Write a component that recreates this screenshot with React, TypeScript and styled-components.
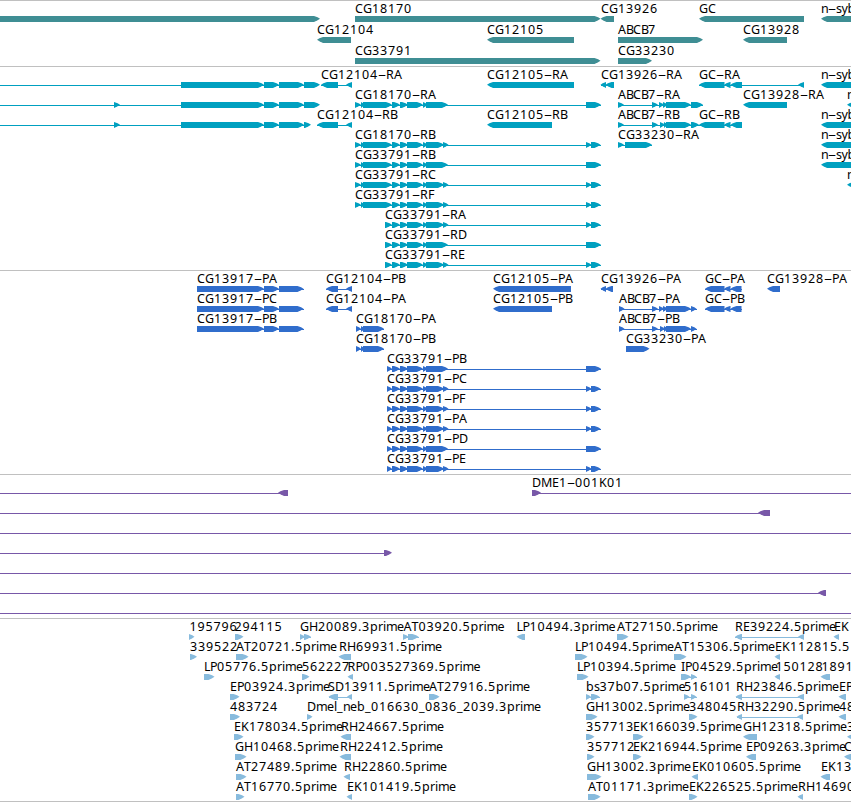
import React from "react";
import styled, { createGlobalStyle } from "styled-components";

const GlobalStyle = createGlobalStyle`
  html, body {
    margin: 0;
    padding: 0;
    background: #ffffff;
    overflow: hidden;
  }
`;

const Browser = styled.main`
  width: 851px;
  height: 802px;
  overflow: hidden;
  display: flex;
  flex-direction: column;
  background: #ffffff;
`;

const TrackPanel = styled.section<{ $color: string; $height: number }>`
  box-sizing: border-box;
  flex: none;
  height: ${(p) => p.$height}px;
  border-top: 1px solid #c0c0c0;
  display: flex;
  flex-direction: column;
  color: ${(p) => p.$color};

  &:last-child {
    border-bottom: 1px solid #c0c0c0;
  }
`;

const Lane = styled.svg<{ $pitch: number }>`
  display: block;
  flex: none;
  width: 851px;
  height: ${(p) => p.$pitch}px;
  overflow: visible;
`;

const Label = styled.text`
  font-family: "Noto Sans", sans-serif;
  font-size: 12.5px;
  fill: #000000;
  white-space: pre;
`;

const Intron = styled.rect`
  fill: currentColor;
  shape-rendering: crispEdges;
`;

const Exon = styled.polygon`
  fill: currentColor;
`;

type Dir = "r" | "l";
type Feature = {
  name: string;
  at: number;
  dir: Dir;
  exons: string;
  line?: [number, number];
};
type TrackData = { color: string; height: number; pitch: number; lanes: Feature[][] };

const ADVANCE: Record<string, number> = {
  A: 8, B: 7, C: 8, D: 9, E: 7, G: 9, H: 9, I: 4, K: 8, L: 6, M: 11, P: 7,
  R: 8, S: 7, T: 7, "-": 8, ".": 4, _: 6,
  b: 8, e: 7, i: 3, l: 3, m: 11, n: 7, p: 8, r: 5, s: 5.5, y: 6,
};

type Piece = { text: string; xs: number[] };

// Splits a label at its hyphens, which are drawn wider than the font's own.
function pieces(text: string, start: number): Piece[] {
  const out: Piece[] = [];
  let x = start;
  for (const ch of text) {
    const last = out[out.length - 1];
    if (ch === "-" || !last || last.text === "-") out.push({ text: ch, xs: [x] });
    else {
      last.text += ch;
      last.xs.push(x);
    }
    x += ADVANCE[ch] ?? 8;
  }
  return out;
}

const f = (name: string, at: number, dir: Dir, exons: string, line?: [number, number]): Feature => ({
  name, at, dir, exons, line,
});

function exonPoints(a: number, b: number, dir: Dir): string {
  const head = Math.min(6, b - a);
  const s = dir === "r" ? 1 : -1;
  const tail = dir === "r" ? a : b;
  const tip = dir === "r" ? b : a;
  return [
    [tail, 15],
    [tip - s * head, 15],
    [tip - s * head * 0.4, 16.3],
    [tip, 17.7],
    [tip - s * head * 0.4, 19.2],
    [tip - s * head, 21],
    [tail, 21],
  ]
    .map((p) => p.join(","))
    .join(" ");
}

function FeatureLabel({ name, at }: { name: string; at: number }) {
  return (
    <Label y={12}>
      {pieces(name, at).map((p, i) =>
        p.text === "-" ? (
          <tspan key={i} x={p.xs[0] - 0.2} textLength={8.6} lengthAdjust="spacingAndGlyphs">
            -
          </tspan>
        ) : (
          <tspan key={i} x={p.xs.join(" ")}>{p.text}</tspan>
        )
      )}
    </Label>
  );
}

function FeatureGlyph({ feature }: { feature: Feature }) {
  const spans = feature.exons
    ? feature.exons.split(" ").map((s) => s.split(":").map(Number))
    : [];
  const from = feature.line ? feature.line[0] : spans[0][0];
  const to = feature.line ? feature.line[1] : spans[spans.length - 1][1];
  return (
    <g>
      {(spans.length > 1 || feature.line) && (
        <Intron x={from} y={18} width={to - from} height={1} />
      )}
      {spans.map(([a, b], i) => (
        <Exon key={i} points={exonPoints(a, b, feature.dir)} />
      ))}
      {feature.name && <FeatureLabel name={feature.name} at={feature.at} />}
    </g>
  );
}

const HEAD = "355:361 361:364.5 363:392";
const MID = "392:400 400:408 407:423 423:427.5";
const LONG = `${MID} 426:448 586:601`;
const SPLIT = `${MID} 426:444 443:448.5 586:591.5 591:600.5`;
const UP = "181:264 264:279 279:304";

const genes: TrackData = {
  color: "#3f8e94", height: 66, pitch: 21,
  lanes: [
    [
      f("", 0, "r", "-10:320"), f("CG18170", 355, "r", "355:600.5"),
      f("CG13926", 601, "l", "600.5:614"), f("GC", 699, "l", "699:804"),
      f("n-syb", 821, "l", "821:870"),
    ],
    [
      f("CG12104", 317, "l", "317:351"), f("CG12105", 487, "l", "487:574"),
      f("ABCB7", 618, "r", "618:703"), f("CG13928", 743, "l", "743:787"),
    ],
    [f("CG33791", 355, "r", "355:600.5"), f("CG33230", 618, "r", "618:652")],
  ],
};

const transcripts: TrackData = {
  color: "#00a0c0", height: 204, pitch: 20,
  lanes: [
    [
      f("", 0, "r", `${UP} 304:320`, [0, 310]),
      f("CG12104-RA", 321, "l", "321:338 346:352"),
      f("CG12105-RA", 487, "l", "487:574"),
      f("CG13926-RA", 601, "l", "600.5:606 605.5:614"),
      f("GC-RA", 699, "l", "699:724.5 724:730.5 730.5:742 798:804"),
      f("n-syb", 821, "l", "821:870"),
    ],
    [
      f("", 0, "r", `114:120 ${UP} 304:320`, [0, 310]),
      f("CG18170-RA", 355, "r", `${HEAD} ${LONG}`),
      f("ABCB7-RA", 618, "r", "618:624 652:658 659:663.5 663:667.5 666:691 691:703"),
      f("CG13928-RA", 743, "l", "743:787"),
      f("n", 847, "l", "847:870"),
    ],
    [
      f("", 0, "r", `114:120 ${UP} 304:311`, [0, 306]),
      f("CG12104-RB", 317, "l", "317:338 346:352"),
      f("CG12105-RB", 487, "l", "487:552"),
      f("ABCB7-RB", 618, "r", "618:624 652:658 660:664.5 664:667.5 666:691 691:699"),
      f("GC-RB", 699, "l", "699:724.5 724:730.5 730.5:742"),
      f("n-syb", 821, "l", "821:870"),
    ],
    [
      f("CG18170-RB", 355, "r", `${HEAD} ${SPLIT}`),
      f("CG33230-RA", 618, "r", "618:624 625:652"),
      f("n-syb", 821, "l", "821:870"),
    ],
    [f("CG33791-RB", 355, "r", `${HEAD} ${LONG}`), f("n-syb", 821, "l", "821:870")],
    [f("CG33791-RC", 355, "r", `${HEAD} ${SPLIT}`), f("n", 847, "l", "847:870")],
    [f("CG33791-RF", 355, "r", `${HEAD} ${SPLIT}`)],
    [f("CG33791-RA", 385, "r", `385:392 ${SPLIT}`)],
    [f("CG33791-RD", 385, "r", `385:392 ${LONG}`)],
    [f("CG33791-RE", 385, "r", `385:392 ${SPLIT}`)],
  ],
};

const CDS = "197:264 264:279 279:303.5";
const proteins: TrackData = {
  color: "#306dcc", height: 204, pitch: 20,
  lanes: [
    [
      f("CG13917-PA", 197, "r", CDS), f("CG12104-PB", 326, "l", "326:338 346:352"),
      f("CG12105-PA", 493, "l", "493:571"), f("CG13926-PA", 601, "l", "600.5:606 605.5:613"),
      f("GC-PA", 705, "l", "705:724.5 724:730.5 730.5:741.5"), f("CG13928-PA", 767, "l", "767:780"),
    ],
    [
      f("CG13917-PC", 197, "r", CDS), f("CG12104-PA", 326, "l", "326:338 346:352"),
      f("CG12105-PB", 493, "l", "493:552"),
      f("ABCB7-PA", 619, "r", "619:624.5 652:658 659:663.5 663:667.5 666:691 691:696.5"),
      f("GC-PB", 705, "l", "705:724.5 724:730.5 730.5:741.5"),
    ],
    [
      f("CG13917-PB", 197, "r", CDS), f("CG18170-PA", 356, "r", "356:361 361:364.5 363:384"),
      f("ABCB7-PB", 619, "r", "619:624.5 652:658 660:664.5 664:667.5 666:691 691:696.5"),
    ],
    [f("CG18170-PB", 356, "r", "356:361 361:364.5 363:384"), f("CG33230-PA", 626, "r", "626:649.5")],
    ...["PB", "PC", "PF", "PA", "PD", "PE"].map((s) => [
      f(`CG33791-${s}`, 387, "r", `387:392 ${s === "PB" || s === "PD" ? LONG : SPLIT}`),
    ]),
  ],
};

const clones: TrackData = {
  color: "#7858a8", height: 144, pitch: 20,
  lanes: [
    [f("", 0, "l", "278:288", [0, 288]), f("DME1-001K01", 532, "r", "532:541", [532, 851])],
    [f("", 0, "l", "758:770", [0, 770])],
    [f("", 0, "r", "", [0, 851])],
    [f("", 0, "r", "384:392", [0, 390])],
    [f("", 0, "r", "", [0, 851])],
    [f("", 0, "l", "818:826", [0, 826])],
    [f("", 0, "r", "", [0, 851])],
  ],
};

const ests: TrackData = {
  color: "#88bbdd", height: 184, pitch: 20,
  lanes: [
    [
      f("195796", 189.5, "r", "189:194.5"), f("294115", 234.5, "r", "235:243.5"),
      f("GH20089.3prime", 300, "r", "300:304.5 304:311"),
      f("AT03920.5prime", 403.5, "r", "403:408.5 408:418.5"),
      f("LP10494.3prime", 516.5, "l", "516.5:525"), f("AT27150.5prime", 617, "r", "617:628.5"),
      f("RE39224.5prime", 735, "l", "735:742 798:804"), f("EK", 834, "l", "833.5:839"),
    ],
    [
      f("339522", 190, "r", "190:197"), f("AT20721.5prime", 236, "r", "236:248.5"),
      f("RH69931.5prime", 339, "l", "338.5:351"), f("LP10494.5prime", 575, "r", "575:587.5"),
      f("AT15306.5prime", 674, "r", "674:686.5"), f("EK112815.5", 775, "l", "774.5:780"),
    ],
    [
      f("LP05776.5prime", 204, "r", "204:214.5"), f("562227", 302, "r", "302:309.5"),
      f("RP003527369.5prime", 347.5, "l", "347.5:353"), f("LP10394.5prime", 577, "r", "577:588.5"),
      f("IP04529.5prime", 681, "r", "681:691 691:696.5"), f("150128", 775.5, "l", "774.5:780"),
      f("1891", 821.5, "l", "820.5:830"),
    ],
    [
      f("EP03924.3prime", 230, "r", "230:239.5"), f("SD13911.5prime", 328, "l", "328.5:338 347:352"),
      f("AT27916.5prime", 429, "r", "429:439.5"), f("bs37b07.5prime", 586, "r", "586:591 591:599.5"),
      f("516101", 684, "r", "684:689.5 691:696.5"), f("RH23846.5prime", 736, "l", "735.5:742 797.5:804"),
      f("EP", 839, "l", "838.5:846"),
    ],
    [
      f("483724", 230, "r", "230:240"), f("Dmel_neb_016630_0836_2039.3prime", 307, "r", "307:312.5"),
      f("GH13002.5prime", 586, "r", "586:597.5"), f("348045", 689, "r", "689:697.5"),
      f("RH32290.5prime", 737, "l", "736.5:742 797:803"), f("48", 839, "l", "838.5:846"),
    ],
    [
      f("EK178034.5prime", 234, "r", "234:243.5"), f("RH24667.5prime", 341, "l", "340.5:351"),
      f("357713", 586, "r", "586:594.5"), f("EK166039.5prime", 633, "r", "633:643.5"),
      f("GH12318.5prime", 743, "l", "743:757"), f("3", 847, "l", "847:870"),
    ],
    [
      f("GH10468.5prime", 235, "r", "235:246.5"), f("RH22412.5prime", 340, "l", "339.5:351"),
      f("357712", 587, "r", "587:594.5"), f("EK216944.5prime", 633, "r", "633:641.5"),
      f("EP09263.3prime", 746, "l", "746:756"), f("C", 844, "l", "844:870"),
    ],
    [
      f("AT27489.5prime", 236, "r", "236:246.5"), f("RH22860.5prime", 344, "l", "343.5:350"),
      f("GH13002.3prime", 587, "r", "587:601.5"), f("EK010605.5prime", 692, "l", "691.5:698"),
      f("EK13", 821, "l", "820.5:830"),
    ],
    [
      f("AT16770.5prime", 236, "r", "236:244.5"), f("EK101419.5prime", 347, "l", "346.5:352"),
      f("AT01171.3prime", 588, "r", "588:600.5"), f("EK226525.5prime", 689, "r", "689:697.5"),
      f("RH14690", 798, "l", "797.5:803"),
    ],
  ],
};

function Track({ track }: { track: TrackData }) {
  return (
    <TrackPanel $color={track.color} $height={track.height}>
      {track.lanes.map((lane, i) => (
        <Lane key={i} $pitch={track.pitch}>
          {lane.map((feature, j) => (
            <FeatureGlyph key={j} feature={feature} />
          ))}
        </Lane>
      ))}
    </TrackPanel>
  );
}

export default function App() {
  return (
    <>
      <GlobalStyle />
      <Browser>
        {[genes, transcripts, proteins, clones, ests].map((track, i) => (
          <Track key={i} track={track} />
        ))}
      </Browser>
    </>
  );
}
